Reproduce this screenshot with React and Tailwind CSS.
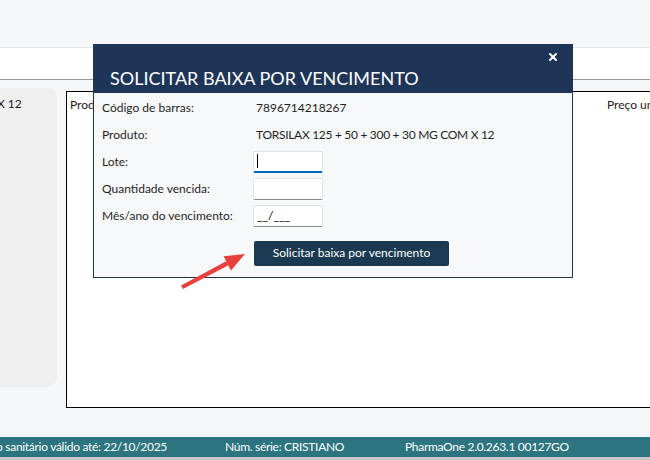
import React from 'react';
import { X } from 'lucide-react';

const font = { fontFamily: 'Lato, "Noto Sans", sans-serif' };

const Field = ({ focused, children }) => (
  <div
    className={`w-[70px] h-[22px] bg-white border border-[#e3e3e3] rounded-[2px] flex items-center px-[3px] ${
      focused ? 'border-b-2 border-b-[#0067c0]' : 'border-b-[#8a8a8a]'
    }`}
  >
    {children}
  </div>
);

const SolicitarBaixaModal = () => {
  const rows = [
    { label: 'Código de barras:', value: '7896714218267' },
    { label: 'Produto:', value: 'TORSILAX 125 + 50 + 300 + 30 MG COM X 12', tight: true },
    { label: 'Lote:', field: <Field focused><span className="w-px h-[14px] bg-black" /></Field> },
    { label: 'Quantidade vencida:', field: <Field /> },
    {
      label: 'Mês/ano do vencimento:',
      field: <Field><span className="text-[12px] text-black leading-none">__/___</span></Field>,
    },
  ];

  return (
    <div className="absolute left-[93px] top-[44px] w-[480px] h-[234px] flex flex-col border border-[#1e3557] bg-[#f7f8fa]">
      {/* Header */}
      <div className="relative h-[48px] bg-[#1e3557] px-[16px] flex items-end pb-[1px]">
        <h2 className="text-white text-[18px] leading-[28px]">SOLICITAR BAIXA POR VENCIMENTO</h2>
        <X className="absolute right-[13px] top-[6px] w-[12px] h-[12px] text-white" strokeWidth={4} />
      </div>

      {/* Body */}
      <div className="flex flex-col pt-[1px] px-[8px]">
        {rows.map((r) => (
          <div key={r.label} className="h-[27px] grid grid-cols-[151px_1fr] items-center text-[12px] text-[#1f1f1f]">
            <span>{r.label}</span>
            {r.field ? (
              <div>{r.field}</div>
            ) : (
              <span className={`pl-[3px] ${r.tight ? 'tracking-[-0.3px]' : ''}`}>{r.value}</span>
            )}
          </div>
        ))}
        <div className="pl-[152px] pt-[10px]">
          <button className="w-[195px] h-[25px] rounded-[2px] bg-[#1b3a52] text-white text-[12px]">
            Solicitar baixa por vencimento
          </button>
        </div>
      </div>
    </div>
  );
};

export default function App() {
  return (
    <div className="relative w-[650px] h-[460px] overflow-hidden bg-[#f6f7f9] flex flex-col" style={font}>
      {/* Top bar */}
      <div className="h-[48px] bg-[#f6f7f9] border-b border-[#e4e6ea]" />
      <div className="h-[32px] bg-white border-b border-[#9a9a9a]" />

      {/* Content */}
      <div className="flex pt-[8px] gap-[9px] text-[12px] text-[#2a1616]">
        <div className="w-[57px] h-[299px] shrink-0 bg-[#efefef] rounded-r-[10px] pt-[7px] overflow-hidden whitespace-nowrap">
          <span className="inline-block -ml-[3px]">X 12</span>
        </div>
        <div className="w-[600px] shrink-0 h-[317px] mt-[3px] bg-white border border-black flex pt-[4px] px-[3px] whitespace-nowrap">
          <span className="w-[537px] shrink-0">Produto</span>
          <span>Preço unitário</span>
        </div>
      </div>

      {/* Status bar */}
      <div className="mt-auto h-[20px] bg-[#2b7480] flex items-center text-white text-[12px] tracking-[-0.3px] whitespace-nowrap">
        <div className="w-[225px] shrink-0 pr-[58px] flex justify-end overflow-hidden">
          <span className="shrink-0">Licenciamento sanitário válido até: 22/10/2025</span>
        </div>
        <span className="w-[180px] shrink-0">Núm. série: CRISTIANO</span>
        <span>PharmaOne 2.0.263.1 00127GO</span>
      </div>
      <div className="h-[3px] bg-[#c9c9c9]" />

      <SolicitarBaixaModal />

      {/* Red arrow */}
      <svg className="absolute left-[176px] top-[248px]" width="80" height="48" viewBox="0 0 80 48">
        <polygon points="5,37.5 7,41 52.5,17.3 50.2,13.3" fill="#e8403c" />
        <polygon points="69,6 47.6,8.2 55,22.4" fill="#e8403c" />
      </svg>
    </div>
  );
}
